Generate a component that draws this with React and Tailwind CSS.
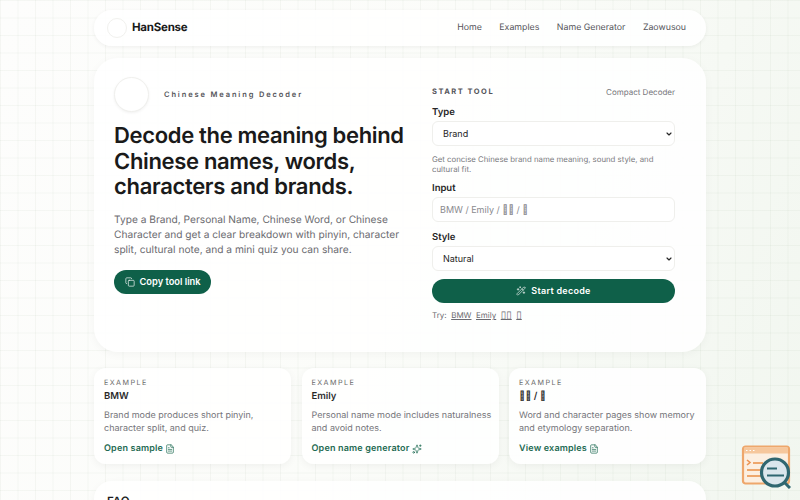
import React from 'react'
import { Copy, WandSparkles, FileText, Sparkles, ChevronDown } from 'lucide-react'

const font = { fontFamily: 'Inter, "Liberation Sans", sans-serif' }
// glyph with no font behind it, the reference shows these as missing-glyph boxes
const tofu = '\u{10FFFD}'

function FloatingWidget() {
  return (
    <svg width="50" height="46" viewBox="0 0 50 46" fill="none" className="fixed right-[9px] bottom-[11px]">
      <rect x="2" y="3.5" width="46" height="37" rx="2.5" fill="#fcefe1" stroke="#eea76c" strokeWidth="2.2" />
      <rect x="3" y="4.5" width="44" height="6" fill="#f6c79c" />
      <path d="M5 7.5h1.5M8.5 7.5h1.5M12 7.5h1.5" stroke="#fff" strokeWidth="1" />
      <path d="M6 17l3 2.5-3 2.5" stroke="#ec9454" strokeWidth="1.6" />
      <path d="M12 20h10M6 27h16M6 33h14" stroke="#eea76c" strokeWidth="1.8" />
      <circle cx="34" cy="29.5" r="13.5" fill="#dbe6ec" stroke="#2f6670" strokeWidth="3.2" />
      <path d="M26 25.5h10M26 32.5h17" stroke="#2f6670" strokeWidth="2" />
      <path d="M44 40l5 5" stroke="#2f6670" strokeWidth="3" />
    </svg>
  )
}

function Select({ value }) {
  return (
    <div className="relative mt-[2px]">
      <select className="block appearance-none w-full h-[25px] px-[10px] rounded-[6px] bg-white border border-[#efefec] text-[9px] text-[#262626]">
        <option>{value}</option>
      </select>
      <ChevronDown size={8} strokeWidth={3.5} className="absolute right-[2.5px] top-[9px] text-[#262626]" />
    </div>
  )
}

function ExampleCard({ title, text, link, icon: Icon }) {
  return (
    <div className="rounded-[12px] bg-white/90 pl-[10px] pr-[6px] pt-[9px] h-[96px] shadow-[0_2px_8px_rgba(0,0,0,0.05)]">
      <div className="text-[7.2px] leading-[11px] tracking-[0.2em] text-[#6b6b6b]">EXAMPLE</div>
      <div className="mt-[2px] text-[9.5px] leading-[14px] font-semibold text-[#1c1c1c] opacity-[0.95]">{title}</div>
      <p className="mt-[5px] text-[9px] leading-[13px] text-[#75757a]">{text}</p>
      <a className="mt-[7px] flex items-center gap-[2px] text-[9px] leading-[13px] font-semibold text-[#1f6b53] tracking-[0.02em]">
        {link} <Icon size={10} strokeWidth={1.7} />
      </a>
    </div>
  )
}

export default function App() {
  return (
    <div
      style={font}
      className="[text-rendering:geometricPrecision] min-h-screen bg-[#f9faf6] bg-[linear-gradient(rgba(140,160,130,0.07)_1px,transparent_1px),linear-gradient(90deg,rgba(140,160,130,0.07)_1px,transparent_1px),linear-gradient(110deg,#fdfdfc_0%,#fbfcf9_50%,#f1f6ef_100%)] bg-[length:17.5px_17.5px,17.5px_17.5px,100%_100%]"
    >
      <div className="w-[612px] mx-auto pt-[10px]">
        {/* Nav */}
        <nav className="h-[36px] rounded-full bg-white/90 shadow-[0_1px_4px_rgba(0,0,0,0.06)] flex items-center justify-between pl-[13px] pr-[20px]">
          <div className="flex items-center gap-[5px]">
            <span className="w-[20px] h-[20px] rounded-full bg-white border border-[#f1f1ee]" />
            <span className="text-[11.5px] font-bold text-[#1a1a1a] tracking-[-0.02em]">HanSense</span>
          </div>
          <div className="flex items-center gap-[17.5px] text-[8.8px] text-[#55555a]">
            <span>Home</span>
            <span>Examples</span>
            <span>Name Generator</span>
            <span>Zaowusou</span>
          </div>
        </nav>

        {/* Hero */}
        <section className="mt-[12px] h-[294px] rounded-[24px] bg-white/90 shadow-[0_2px_10px_rgba(0,0,0,0.04)] flex pl-[20px] pr-[31px] pt-[19px]">
          <div className="w-[318px]">
            <div className="flex items-center gap-[15px]">
              <span className="w-[35px] h-[35px] rounded-full bg-white border border-[#f0f0ed] shadow-[0_1px_3px_rgba(0,0,0,0.06)]" />
              <span className="text-[7.5px] font-semibold tracking-[0.25em] text-[#55555a]">Chinese Meaning Decoder</span>
            </div>
            <h1 className="mt-[12px] w-[296px] text-[22px] leading-[25.5px] font-semibold tracking-[-0.015em] text-[#1a1a1a]">
              Decode the meaning behind Chinese names, words, characters and brands.
            </h1>
            <p className="mt-[12px] w-[300px] text-[10.2px] leading-[15px] text-[#6b6b70]">
              Type a Brand, Personal Name, Chinese Word, or Chinese Character and get a clear breakdown with pinyin, character split, cultural note, and a mini quiz you can share.
            </p>
            <button className="mt-[12px] h-[24px] px-[10.5px] rounded-full bg-[#0f6049] text-white text-[9.3px] font-semibold flex items-center gap-[5px]">
              <Copy size={10} strokeWidth={1.6} /> Copy tool link
            </button>
          </div>

          <div className="w-[243px]">
            <div className="flex items-center justify-between mt-[9px] h-[12px]">
              <span className="text-[7.5px] font-bold tracking-[0.2em] text-[#55555a]">START TOOL</span>
              <span className="text-[8px] text-[#75757a]">Compact Decoder</span>
            </div>
            <label className="block mt-[8px] text-[9.5px] leading-[13px] font-semibold text-[#262626]">Type</label>
            <Select value="Brand" />
            <p className="mt-[8px] text-[7.8px] leading-[10px] text-[#7b7b80]">
              Get concise Chinese brand name meaning, sound style, and cultural fit.
            </p>
            <label className="block mt-[8px] text-[9.5px] leading-[13px] font-semibold text-[#262626]">Input</label>
            <input
              className="block mt-[2px] w-full h-[25px] px-[7px] rounded-[6px] bg-white border border-[#efefec] text-[9px] placeholder:text-[#8a8a8f]"
              placeholder={`BMW / Emily / ${tofu}${tofu} / ${tofu}`}
            />
            <label className="block mt-[9px] text-[9.5px] leading-[13px] font-semibold text-[#262626]">Style</label>
            <Select value="Natural" />
            <button className="mt-[8px] w-full h-[24px] rounded-full bg-[#0f6049] text-white text-[9px] font-semibold tracking-[0.03em] flex items-center justify-center gap-[5px]">
              <WandSparkles size={10} strokeWidth={1.5} /> Start decode
            </button>
            <div className="mt-[6px] h-[12px] flex items-center gap-[4.5px] text-[8px] text-[#6b6b70]">
              <span>Try:</span>
              <span className="underline">BMW</span>
              <span className="underline">Emily</span>
              <span className="underline text-[10px] leading-none">{'\u25AF\u25AF'}</span>
              <span className="underline text-[10px] leading-none">{'\u25AF'}</span>
            </div>
          </div>
        </section>

        {/* Examples */}
        <section className="mt-[16px] grid grid-cols-3 gap-[10.5px]">
          <ExampleCard title="BMW" text="Brand mode produces short pinyin, character split, and quiz." link="Open sample" icon={FileText} />
          <ExampleCard title="Emily" text="Personal name mode includes naturalness and avoid notes." link="Open name generator" icon={Sparkles} />
          <ExampleCard title={`${tofu}${tofu} / ${tofu}`} text="Word and character pages show memory and etymology separation." link="View examples" icon={FileText} />
        </section>

        {/* FAQ */}
        <section className="mt-[17px] rounded-[18px] bg-white/90 shadow-[0_2px_8px_rgba(0,0,0,0.04)] px-[13px] pt-[12px] pb-[20px]">
          <h2 className="text-[11.5px] font-semibold text-[#1c1c1c]">FAQ</h2>
        </section>
      </div>
      <FloatingWidget />
    </div>
  )
}
